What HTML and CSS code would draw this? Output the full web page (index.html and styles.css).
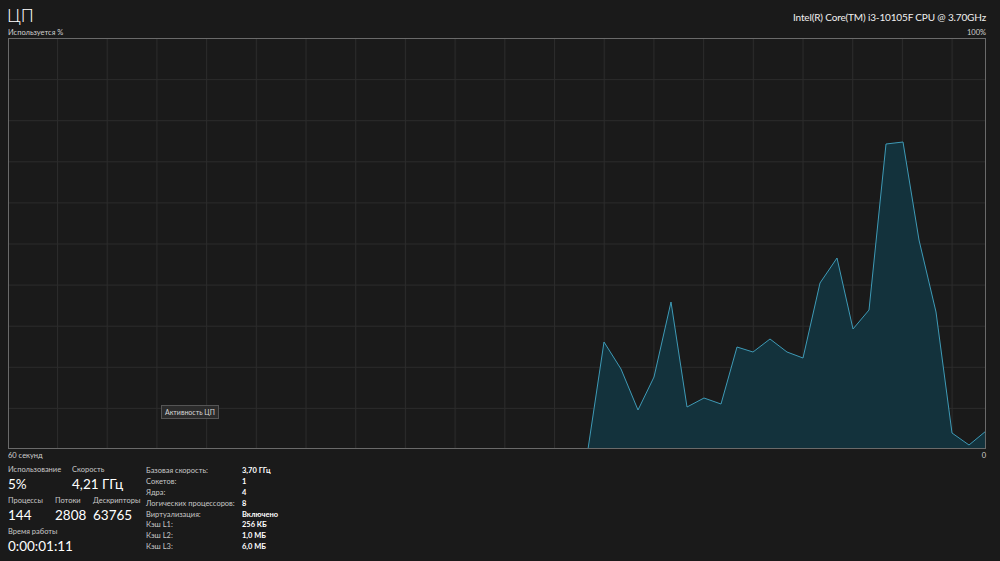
FILE: index.html
```html
<!DOCTYPE html>
<html lang="ru">
<head>
    <meta charset="UTF-8">
    <title>ЦП</title>
    <link rel="stylesheet" href="styles.css">
</head>
<body>
    <div class="page">
        <div class="header">
            <h1 class="title">ЦП</h1>
            <div class="cpu-name">Intel(R) Core(TM) i3-10105F CPU @ 3.70GHz</div>
        </div>
        <div class="axis-row top">
            <span>Используется %</span>
            <span>100%</span>
        </div>

        <div class="chart">
            <svg class="chart-svg" viewBox="9 39 976 409" preserveAspectRatio="none">
                <defs>
                    <pattern id="grid" x="57" y="38" width="49.7" height="41.1" patternUnits="userSpaceOnUse">
                        <path d="M0.5 0 V41.1 M0 0.5 H49.7" stroke="#2b2b2b" stroke-width="1" fill="none"/>
                    </pattern>
                </defs>
                <rect x="9" y="39" width="976" height="409" fill="url(#grid)"/>
                <polygon class="area"
                    points="588,449 604,342 621,369 638,410 654,377 671,302 687,407 704,398 721,404 737,347 753,352 770,339 787,352 803,358 820,283 837,258 853,329 869,310 886,144 903,142 919,240 936,312 952,433 969,445 986,431 986,449"/>
                <polyline class="line"
                    points="588,449 604,342 621,369 638,410 654,377 671,302 687,407 704,398 721,404 737,347 753,352 770,339 787,352 803,358 820,283 837,258 853,329 869,310 886,144 903,142 919,240 936,312 952,433 969,445 986,431"/>
            </svg>
            <div class="tooltip">Активность ЦП</div>
        </div>

        <div class="axis-row bottom">
            <span>60 секунд</span>
            <span>0</span>
        </div>

        <div class="stats">
            <div class="dyn">
                <div class="stat-row">
                    <div class="stat w64">
                        <div class="label">Использование</div>
                        <div class="value">5%</div>
                    </div>
                    <div class="stat">
                        <div class="label">Скорость</div>
                        <div class="value">4,21 ГГц</div>
                    </div>
                </div>
                <div class="stat-row">
                    <div class="stat w47">
                        <div class="label">Процессы</div>
                        <div class="value">144</div>
                    </div>
                    <div class="stat w38">
                        <div class="label">Потоки</div>
                        <div class="value">2808</div>
                    </div>
                    <div class="stat">
                        <div class="label">Дескрипторы</div>
                        <div class="value">63765</div>
                    </div>
                </div>
                <div class="stat-row">
                    <div class="stat">
                        <div class="label">Время работы</div>
                        <div class="value">0:00:01:11</div>
                    </div>
                </div>
            </div>

            <div class="specs">
                <span class="k">Базовая скорость:</span><span class="v">3,70 ГГц</span>
                <span class="k">Сокетов:</span><span class="v">1</span>
                <span class="k">Ядра:</span><span class="v">4</span>
                <span class="k">Логических процессоров:</span><span class="v">8</span>
                <span class="k">Виртуализация:</span><span class="v">Включено</span>
                <span class="k">Кэш L1:</span><span class="v">256 КБ</span>
                <span class="k">Кэш L2:</span><span class="v">1,0 МБ</span>
                <span class="k">Кэш L3:</span><span class="v">6,0 МБ</span>
            </div>
        </div>
    </div>
</body>
</html>
```

FILE: styles.css
```css
body {
    margin: 0;
    background-color: #1a1a1a;
    color: #ffffff;
    font-family: Lato, "Noto Sans", sans-serif;
}
.page {
    width: 978px;
    padding: 0 0 0 8px;
}
.header {
    display: flex;
    justify-content: space-between;
    align-items: flex-end;
    height: 28px;
}
.title {
    margin: 0 0 0 -1px;
    font-size: 18px;
    font-weight: 300;
    line-height: 26px;
    color: #ffffff;
}
.cpu-name {
    font-size: 10px;
    letter-spacing: -0.15px;
    line-height: 14px;
    margin-bottom: 4px;
    color: #f0f0f0;
}
.axis-row {
    display: flex;
    justify-content: space-between;
    font-size: 7.5px;
    color: #d0d0d0;
}
.axis-row.top {
    height: 10px;
    line-height: 10px;
}
.axis-row.bottom {
    height: 13px;
    line-height: 13px;
}
.chart {
    position: relative;
    height: 409px;
    border: 1px solid #6a6a6a;
    background-color: #1a1a1a;
}
.chart-svg {
    display: block;
    width: 100%;
    height: 100%;
}
.area {
    fill: #13323c;
}
.line {
    fill: none;
    stroke: #3e9ab6;
    stroke-width: 1;
}
.tooltip {
    position: absolute;
    left: 152px;
    top: 366px;
    padding: 0 3px;
    height: 12px;
    line-height: 12px;
    font-size: 7px;
    color: #d8d8d8;
    background-color: #2b2b2b;
    border: 1px solid #555555;
}
.stats {
    display: flex;
    padding-top: 2px;
}
.dyn {
    width: 138px;
}
.stat-row {
    display: flex;
    height: 31px;
}
.stat-row:last-child {
    height: auto;
}
.w64 {
    width: 64px;
}
.w47 {
    width: 47px;
}
.w38 {
    width: 38px;
}
.label {
    font-size: 7.5px;
    line-height: 12px;
    color: #c8c8c8;
}
.value {
    font-size: 13.5px;
    line-height: 16px;
    color: #ffffff;
}
.specs {
    display: grid;
    grid-template-columns: 96px auto;
    grid-auto-rows: 10.9px;
    font-size: 7.5px;
    line-height: 10.9px;
    padding-top: 2px;
}
.k {
    color: #c8c8c8;
}
.v {
    color: #ffffff;
    font-weight: 700;
}
```
